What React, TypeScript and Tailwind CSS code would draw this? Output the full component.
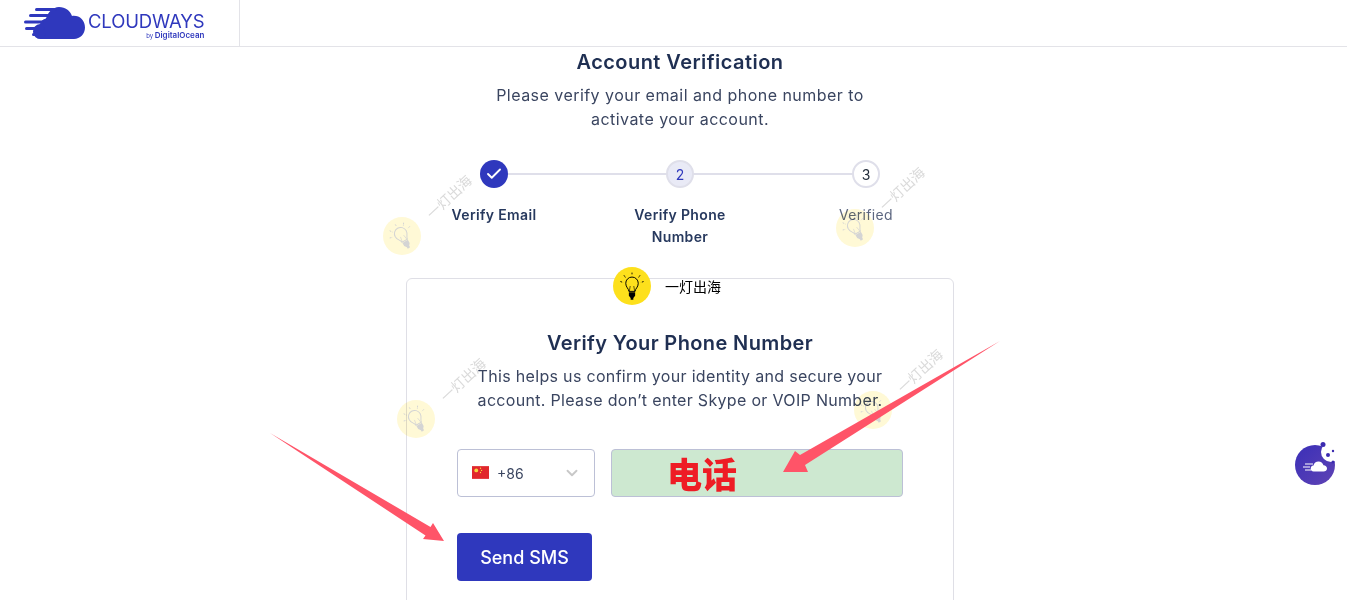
import { Check, ChevronDown } from 'lucide-react'

const cjk = '"Noto Sans CJK SC", sans-serif'

function Bulb({ className }: { className: string }) {
  return (
    <svg viewBox="0 0 38 38" className={className} fill="none" stroke="currentColor">
      <path d="M19 4v3M10 7l2 3M28 7l-2 3M6 14l3 1M32 14l-3 1" strokeWidth="1" strokeDasharray="2 1" />
      <path d="M15.5 25c0-3-3.500-4.500-3.500-9a7 7 0 0 1 14 0c0 4.500-3.500 6-3.500 9z" strokeWidth="1.100" />
      <path d="M16 25l1-6M22 25l-1-6" strokeWidth="0.700" />
      <path d="M15.500 26h7v4l-2 2.500v2h-3v-2l-2-2.500z" fill="currentColor" stroke="none" />
    </svg>
  )
}

// faint diagonal watermark stamped over the page
function Watermark({ className }: { className: string }) {
  return (
    <div className={`absolute w-[92px] h-[84px] pointer-events-none mix-blend-multiply ${className}`}>
      <div className="absolute left-0 bottom-0 w-[38px] h-[38px] rounded-full bg-[#fff9d6] text-[#d4d4d4] flex items-center justify-center">
        <Bulb className="w-[34px] h-[34px] -rotate-[30deg]" />
      </div>
      <span
        className="absolute left-[37px] top-[16px] w-[60px] text-[14px] leading-[16px] text-[#dadada] -rotate-[43deg] whitespace-nowrap"
        style={{ fontFamily: cjk }}
      >
        一灯出海
      </span>
    </div>
  )
}

function Logo() {
  return (
    <div className="flex items-center">
      <svg viewBox="0 0 62 34" className="w-[62px] h-[34px]" fill="#2f38bd">
        <path d="M17 33a7.500 7.500 0 0 1-1-15c1-3 3-5 6-5.500C24 6 29 1 35 1c6.500 0 11 3.500 13 9 7-1 13 4 13 11.500C61 28 56 33 50 33z" />
        <rect x="11" y="2" width="22" height="3" rx="1.500" />
        <rect x="5" y="8" width="20" height="3" rx="1.500" />
        <rect x="0" y="14.500" width="20" height="3" rx="1.500" />
        <rect x="1" y="21" width="20" height="3" rx="1.500" />
        <rect x="8" y="27" width="14" height="3" rx="1.500" />
      </svg>
      <div className="ml-[2px] mt-[4px] flex flex-col items-end text-[#2f38bd]">
        <span className="text-[18.500px] leading-[20px] tracking-[-0.15px]">CLOUDWAYS</span>
        <span className="text-[8px] leading-[9px] font-semibold">
          <span className="text-[6px] font-normal">by </span>DigitalOcean
        </span>
      </div>
    </div>
  )
}

function Step({ label, circle, labelClass }: { label: string; circle: React.ReactNode; labelClass: string }) {
  return (
    <div className="relative flex flex-col items-center w-[104px] text-center">
      {circle}
      <div className={`mt-[16px] text-[14px] leading-[22px] tracking-[0.35px] ${labelClass}`}>{label}</div>
    </div>
  )
}

export default function App() {
  return (
    <div className="relative h-[600px] w-[1347px] overflow-hidden bg-white text-[#2b3a5a]" style={{ fontFamily: 'Inter, sans-serif' }}>
      <header className="h-[47px] border-b border-[#e3e3e8] flex">
        <div className="w-[240px] border-r border-[#e3e3e8] pl-[24px] flex items-center">
          <Logo />
        </div>
      </header>

      <main className="ml-[406px] w-[548px] flex flex-col items-center">
        <h1 className="mt-[2px] text-[20px] leading-[26px] font-semibold text-[#1f2f52] tracking-[0.45px]">Account Verification</h1>
        <p className="mt-[8px] w-[400px] text-center text-[16px] leading-[24px] text-[#3a4560] tracking-[0.46px]">
          Please verify your email and phone number to activate your account.
        </p>

        <div className="relative mt-[29px] w-[476px] h-[118px] flex justify-between">
          <div className="absolute left-[52px] right-[52px] top-[13px] h-[2px] bg-[#dfdfea]" />
          <Step
            label="Verify Email"
            labelClass="font-semibold text-[#27395e]"
            circle={
              <div className="w-[28px] h-[28px] rounded-full bg-[#2f38bd] text-white flex items-center justify-center">
                <Check className="w-[18px] h-[18px]" strokeWidth={2.500} />
              </div>
            }
          />
          <Step
            label="Verify Phone Number"
            labelClass="font-semibold text-[#27395e] w-[96px]"
            circle={
              <div className="w-[28px] h-[28px] rounded-full bg-[#e9eaf6] border-2 border-[#dfdfea] text-[#2f38bd] text-[14px] flex items-center justify-center">
                2
              </div>
            }
          />
          <Step
            label="Verified"
            labelClass="text-[#5d6780]"
            circle={
              <div className="w-[28px] h-[28px] rounded-full bg-white border-2 border-[#dfdfea] text-[#1f2937] text-[14px] flex items-center justify-center">
                3
              </div>
            }
          />
        </div>

        <section className="w-[548px] h-[400px] border border-[#dfdfe6] rounded-[6px] flex flex-col items-center">
          <h2 className="mt-[51px] text-[20px] leading-[26px] font-semibold text-[#1f2f52] tracking-[0.38px]">Verify Your Phone Number</h2>
          <p className="mt-[8px] w-[440px] text-center text-[16px] leading-[24px] text-[#3a4560] tracking-[0.32px]">
            This helps us confirm your identity and secure your account. Please don’t enter Skype or VOIP Number.
          </p>

          <div className="mt-[37px] w-[446px] flex gap-[16px]">
            <div className="w-[138px] h-[48px] rounded-[4px] border border-[#bcc0d6] pl-[14px] pr-[13px] flex items-center">
              <svg viewBox="0 0 16 12" className="w-[17px] h-[13px] -mt-[2px]">
                <rect width="16" height="12" fill="#e1282c" />
                <circle cx="4" cy="4" r="1.800" fill="#f5d63d" />
                <circle cx="8" cy="2" r="0.600" fill="#f5d63d" />
                <circle cx="9" cy="4" r="0.600" fill="#f5d63d" />
                <circle cx="8" cy="6" r="0.600" fill="#f5d63d" />
              </svg>
              <span className="ml-[8px] text-[14px] text-[#3a4560]">+86</span>
              <ChevronDown className="ml-auto w-[18px] h-[18px] text-[#c8c8c8]" strokeWidth={2.500} />
            </div>
            <div className="w-[292px] h-[48px] rounded-[4px] border border-[#bcc0d6] bg-[#cde8d0] pl-[55px] flex items-center">
              <span className="text-[35px] leading-[48px] font-black text-[#ee1c25]" style={{ fontFamily: cjk }}>电话</span>
            </div>
          </div>

          <div className="mt-[36px] w-[446px]">
            <button className="w-[135px] h-[48px] rounded-[4px] bg-[#2f38bd] text-white text-[18px] font-medium">Send SMS</button>
          </div>
        </section>
      </main>

      {/* overlays stamped on the screenshot */}
      <Watermark className="left-[383px] top-[171px]" />
      <Watermark className="left-[836px] top-[163px]" />
      <Watermark className="left-[397px] top-[354px]" />
      <Watermark className="left-[854px] top-[345px]" />

      <div className="absolute left-[613px] top-[267px] flex items-center">
        <div className="w-[38px] h-[38px] rounded-full bg-[#fde01c] text-black flex items-center justify-center">
          <Bulb className="w-[34px] h-[34px]" />
        </div>
        <span className="ml-[14px] text-[14px] text-black" style={{ fontFamily: cjk }}>一灯出海</span>
      </div>

      <svg className="absolute left-0 top-0 w-[1347px] h-[600px] pointer-events-none" viewBox="0 0 1347 600" fill="#ff5468">
        <polygon points="270,433 430.500,527 433,523 444,541 423,539 425.500,535.500" />
        <polygon points="1000,341 800,455 795,451 783,472 808,472 805,465" />
      </svg>

      <svg className="absolute left-[1292px] top-[441px] w-[46px] h-[46px]" viewBox="0 0 46 46">
        <defs>
          <linearGradient id="bubble" x1="0" y1="0" x2="1" y2="1">
            <stop offset="0" stopColor="#3a2fb8" />
            <stop offset="1" stopColor="#5f43b4" />
          </linearGradient>
        </defs>
        <circle cx="23" cy="24" r="20" fill="url(#bubble)" />
        <circle cx="39" cy="11" r="10" fill="#fff" />
        <circle cx="31" cy="3.500" r="2.500" fill="#3b2bb0" />
        <circle cx="36" cy="14" r="2" fill="#3b2bb0" />
        <circle cx="41" cy="10" r="1.200" fill="#3b2bb0" />
        <circle cx="41" cy="21" r="1.500" fill="#3b2bb0" />
        <path d="M22 30.500a3 3 0 0 1-.5-6c.5-2.500 2.500-4 5-4 2.500 0 4.200 1.500 5 3.700 2 0 3.500 1.500 3.500 3.200 0 1.700-1.500 3.100-3.500 3.100z" fill="#fff" />
        <path d="M13 23h8M11 26h7M13 29h6" stroke="#fff" strokeWidth="1.200" />
      </svg>
    </div>
  )
}
